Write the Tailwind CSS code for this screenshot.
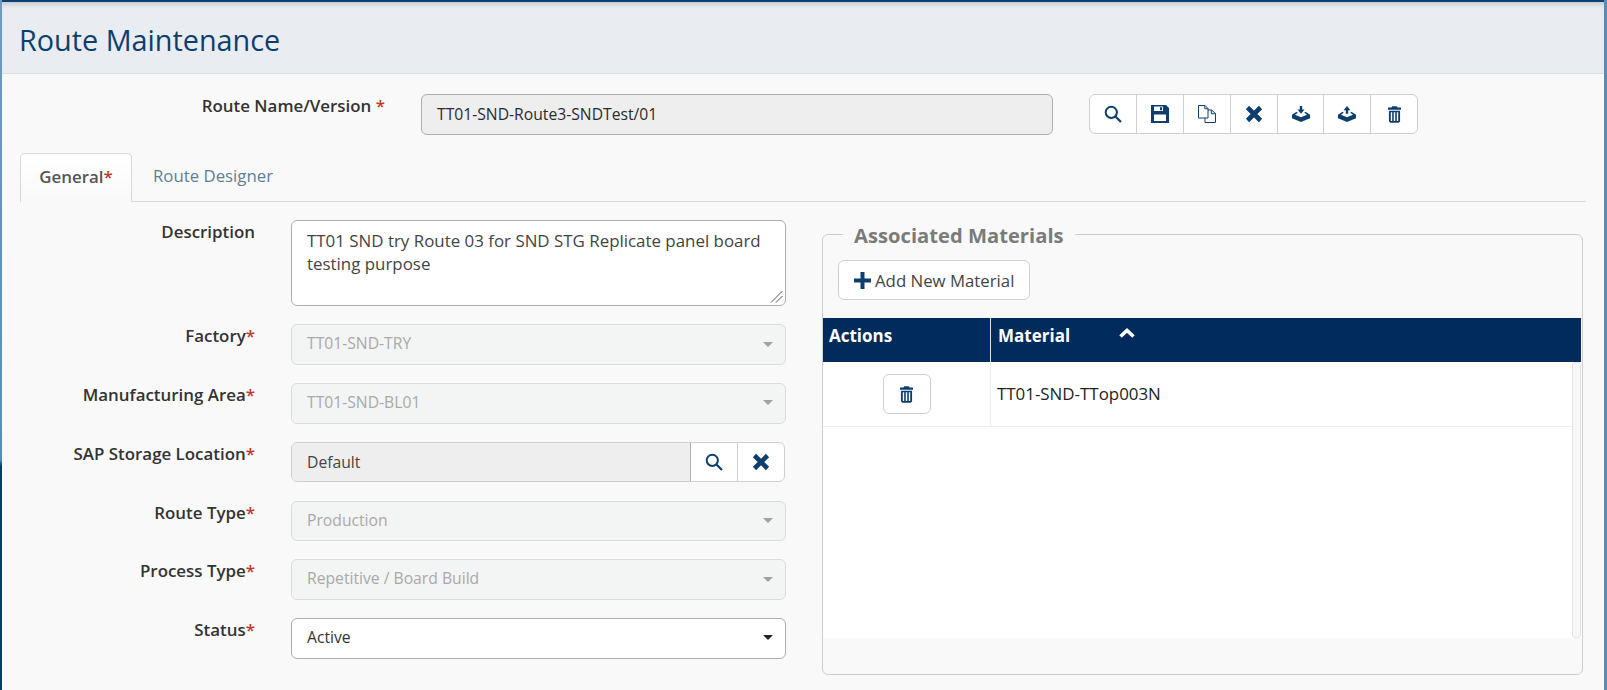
<!doctype html>
<html>
<head>
<meta charset="UTF-8" />
<script src="https://cdn.jsdelivr.net/npm/@tailwindcss/browser@4"></script>
</head>
<body class="h-[690px] overflow-hidden bg-[#f9f9f9] font-['Open_Sans',sans-serif] text-[#2b2b2b]">

<svg class="hidden">
  <symbol id="i-search" viewBox="0 0 18 18"><circle cx="7.3" cy="7.3" r="5.6" fill="none" stroke="currentColor" stroke-width="2"/><path d="M11.5 11.5 17 17" stroke="currentColor" stroke-width="2.2" fill="none"/></symbol>
  <symbol id="i-save" viewBox="0 0 18 18"><path fill-rule="evenodd" fill="currentColor" d="M0 0h15l3 3v15H0zM3 1.500v4.500h9V1.500zM9 2.200h2v3H9zM3 9.500V16h12V9.500z"/></symbol>
  <symbol id="i-copy" viewBox="0 0 18 18"><path fill="none" stroke="currentColor" stroke-width="1" d="M.5.500h6.500l3 3v9.500H.5zM6.800.700v3h3M10 5h3.500l4 3.500v9H7v-4.500M13.300 5.200v3.500h4"/></symbol>
  <symbol id="i-x" viewBox="0 0 18 18"><path d="M2.500 2.500l13 13M15.500 2.500l-13 13" stroke="currentColor" stroke-width="4.600" fill="none"/></symbol>
  <symbol id="i-down" viewBox="0 0 18 16"><path fill="currentColor" d="M7.800 0h2.400v3.500h2.300L9 7.800 5.500 3.500h2.300zM0 8.800l4.500-3 1.200 1-2.700 2L9 11.300l6-2.500-2.700-2 1.200-1 4.500 3v3.500L9 16l-9-3.700z"/></symbol>
  <symbol id="i-up" viewBox="0 0 18 16"><path fill="currentColor" d="M9 0l3.500 4.300h-2.300v3.500H7.800V4.300H5.500zM0 8.800l4.500-3 1.200 1-2.700 2L9 11.300l6-2.500-2.700-2 1.200-1 4.500 3v3.500L9 16l-9-3.700z"/></symbol>
  <symbol id="i-trash" viewBox="0 0 14 18"><path fill="currentColor" fill-rule="evenodd" d="M4.500 0h5l.8 1.500H14V4H0V1.500h3.700zM1 5h12v11.500L11.500 18h-9L1 16.500zM3 6.500V16h1.500V6.500zM6.200 6.500V16h1.600V6.500zM9.500 6.500V16H11V6.500z"/></symbol>
</svg>

<div class="flex h-full">
  <div class="w-[2px] shrink-0 bg-[linear-gradient(to_bottom,#6f9bc0_0,#5b8cb6_460px,#0a3a68_466px,#0a3a68_100%)]"></div>

  <div class="min-w-0 flex-1">
    <div class="h-[2px] bg-[#0d4173]"></div>
    <header class="flex h-[72px] items-center border-b border-[#dcdfe3] bg-[#e9ecf1] pl-[17px] pt-[6px] shadow-[inset_0_5px_5px_-3px_rgba(0,0,0,0.18)]">
      <h1 class="text-[28.8px] leading-none text-[#0d3f6e]">Route Maintenance</h1>
    </header>

    <div class="flex h-[41px] mt-[20px] items-start">
      <label class="w-[383px] pt-[1px] text-right text-[16.9px] font-semibold leading-[22px] text-[#333333]">Route Name/Version <span class="text-[#c0392b]">*</span></label>
      <div class="ml-[36px] flex h-[41px] w-[632px] items-center rounded-[6px] border border-[#aeaeae] bg-[#eeeeee] px-[15px] text-[15.7px]">TT01-SND-Route3-SNDTest/01</div>
      <div class="ml-[36px] flex h-[40px] overflow-hidden rounded-[6px] border border-[#cfcfcf] bg-white text-[#0d3f6e]">
        <span class="flex w-[47px] items-center justify-center border-r border-[#cfcfcf]"><svg class="h-[18px] w-[18px]"><use href="#i-search"/></svg></span>
        <span class="flex w-[47px] items-center justify-center border-r border-[#cfcfcf]"><svg class="h-[18px] w-[18px]"><use href="#i-save"/></svg></span>
        <span class="flex w-[47px] items-center justify-center border-r border-[#cfcfcf]"><svg class="h-[18px] w-[18px]"><use href="#i-copy"/></svg></span>
        <span class="flex w-[47px] items-center justify-center border-r border-[#cfcfcf]"><svg class="h-[18px] w-[18px]"><use href="#i-x"/></svg></span>
        <span class="flex w-[46px] items-center justify-center border-r border-[#cfcfcf]"><svg class="h-[16px] w-[18px]"><use href="#i-down"/></svg></span>
        <span class="flex w-[47px] items-center justify-center border-r border-[#cfcfcf]"><svg class="h-[16px] w-[18px]"><use href="#i-up"/></svg></span>
        <span class="flex w-[46px] items-center justify-center"><svg class="h-[17px] w-[13px]"><use href="#i-trash"/></svg></span>
      </div>
    </div>

    <div class="ml-[18px] mr-[18px] mt-[18px] flex h-[49px] border-b border-[#d9d9d9]">
      <div class="h-[49px] w-[112px] rounded-t-[5px] border border-b-0 border-[#d9d9d9] bg-[linear-gradient(to_bottom,#ffffff,#f9f9f9)] pt-[11px] text-center text-[16.9px] font-semibold leading-[24px] text-[#555555]">General<span class="text-[#c0392b]">*</span></div>
      <div class="pl-[21px] pt-[11px] text-[16.8px] leading-[24px] text-[#5f7f94]">Route Designer</div>
    </div>

    <div class="flex">
      <div class="w-[820px] shrink-0">
        <div class="mt-[18px] flex">
          <label class="w-[253px] pt-[1px] text-right text-[16.9px] font-semibold leading-[22px] text-[#333333]">Description</label>
          <div class="relative ml-[36px] h-[86px] w-[495px] rounded-[6px] border border-[#aeaeae] bg-white px-[15px] pt-[8px] text-[16.9px] leading-[23px] text-[#444444]">TT01 SND try Route 03 for SND STG Replicate panel board testing purpose
            <svg class="absolute bottom-[1px] right-[1px] h-[15px] w-[15px]" viewBox="0 0 15 15"><path d="M13.500 2 2 13.500M13.500 7 7 13.500" stroke="#555555" stroke-width="1" fill="none"/></svg>
          </div>
        </div>

        <div class="mt-[18px] flex">
          <label class="w-[253px] pt-[1px] text-right text-[16.9px] font-semibold leading-[22px] text-[#333333]">Factory<span class="text-[#c0392b]">*</span></label>
          <div class="ml-[36px] flex h-[41px] w-[495px] items-center justify-between rounded-[6px] border border-[#dcdcdc] bg-[#f3f4f4] pb-[1px] pl-[15px] pr-[12px] text-[15.7px] text-[#a9a9a9]">TT01-SND-TRY<span class="h-0 w-0 border-x-[5px] border-t-[5px] border-x-transparent border-t-[#a0a0a0]"></span></div>
        </div>
        <div class="mt-[18px] flex">
          <label class="w-[253px] pt-[1px] text-right text-[16.9px] font-semibold leading-[22px] text-[#333333]">Manufacturing Area<span class="text-[#c0392b]">*</span></label>
          <div class="ml-[36px] flex h-[41px] w-[495px] items-center justify-between rounded-[6px] border border-[#dcdcdc] bg-[#f3f4f4] pb-[2px] pl-[15px] pr-[12px] text-[15.7px] text-[#a9a9a9]">TT01-SND-BL01<span class="h-0 w-0 border-x-[5px] border-t-[5px] border-x-transparent border-t-[#a0a0a0]"></span></div>
        </div>
        <div class="mt-[18px] flex">
          <label class="w-[253px] pt-[1px] text-right text-[16.9px] font-semibold leading-[22px] text-[#333333]">SAP Storage Location<span class="text-[#c0392b]">*</span></label>
          <div class="ml-[36px] flex h-[40px] w-[494px] overflow-hidden rounded-[6px] border border-[#cfcfcf] bg-white text-[#0d3f6e]">
            <div class="flex flex-1 items-center border-r border-[#aeaeae] bg-[#eeeeee] pl-[15px] pt-[1px] text-[15.7px] text-[#444444]">Default</div>
            <span class="flex w-[47px] items-center justify-center border-r border-[#cfcfcf]"><svg class="h-[18px] w-[18px]"><use href="#i-search"/></svg></span>
            <span class="flex w-[46px] items-center justify-center"><svg class="h-[18px] w-[18px]"><use href="#i-x"/></svg></span>
          </div>
        </div>
        <div class="mt-[19px] flex">
          <label class="w-[253px] pt-[1px] text-right text-[16.9px] font-semibold leading-[22px] text-[#333333]">Route Type<span class="text-[#c0392b]">*</span></label>
          <div class="ml-[36px] flex h-[40px] w-[495px] items-center justify-between rounded-[6px] border border-[#dcdcdc] bg-[#f3f4f4] pb-[1px] pl-[15px] pr-[12px] text-[15.7px] text-[#a9a9a9]">Production<span class="h-0 w-0 border-x-[5px] border-t-[5px] border-x-transparent border-t-[#a0a0a0]"></span></div>
        </div>
        <div class="mt-[18px] flex">
          <label class="w-[253px] pt-[1px] text-right text-[16.9px] font-semibold leading-[22px] text-[#333333]">Process Type<span class="text-[#c0392b]">*</span></label>
          <div class="ml-[36px] flex h-[41px] w-[495px] items-center justify-between rounded-[6px] border border-[#dcdcdc] bg-[#f3f4f4] pb-[1px] pl-[15px] pr-[12px] text-[15.7px] text-[#a9a9a9]">Repetitive / Board Build<span class="h-0 w-0 border-x-[5px] border-t-[5px] border-x-transparent border-t-[#a0a0a0]"></span></div>
        </div>
        <div class="mt-[18px] flex">
          <label class="w-[253px] pt-[1px] text-right text-[16.9px] font-semibold leading-[22px] text-[#333333]">Status<span class="text-[#c0392b]">*</span></label>
          <div class="ml-[36px] flex h-[41px] w-[495px] items-center justify-between rounded-[6px] border border-[#aeaeae] bg-white pb-[2px] pl-[15px] pr-[12px] text-[15.7px] text-[#333333]">Active<span class="h-0 w-0 border-x-[5px] border-t-[5px] border-x-transparent border-t-[#222222]"></span></div>
        </div>
      </div>

      <div class="relative mt-[32px] h-[441px] w-[761px] rounded-[6px] border border-[#cfcfcf]">
        <div class="absolute -top-[13px] left-[20px] bg-[#f9f9f9] px-[11px] text-[20.2px] font-bold leading-[26px] text-[#7b7b7b]">Associated Materials</div>
        <div class="ml-[15px] mt-[25px] flex h-[40px] w-[192px] items-center gap-[4px] rounded-[6px] border border-[#cfcfcf] bg-white pl-[15px] pt-[1px] text-[16.8px] text-[#444444]">
          <svg class="h-[17px] w-[17px]" viewBox="0 0 17 17"><path d="M8.500 0v17M0 8.500h17" stroke="#0d3f6e" stroke-width="4" fill="none"/></svg>
          Add New Material
        </div>
        <div class="mt-[18px] flex h-[44px] w-[758px] bg-[#002b5c] text-[17px] font-bold text-white">
          <div class="w-[168px] border-r border-[#dfe5ec] pl-[6px] pt-[7px] leading-[22px]">Actions</div>
          <div class="flex w-[240px] items-start pl-[7px] pt-[7px] leading-[22px]">Material
            <svg class="ml-[49px] mt-[3px] h-[10px] w-[16px]" viewBox="0 0 16 10"><path d="M1.500 8.500 8 2.500l6.500 6" stroke="#ffffff" stroke-width="3.600" fill="none"/></svg>
          </div>
        </div>
        <div class="flex h-[276px] bg-white">
          <div class="min-w-0 flex-1">
            <div class="flex h-[65px] border-b border-[#eeeeee]">
              <div class="flex w-[168px] items-center justify-center border-r border-[#eeeeee]">
                <span class="flex h-[40px] w-[48px] items-center justify-center rounded-[6px] border border-[#cfcfcf] bg-white text-[#0d3f6e]"><svg class="h-[17px] w-[13px]"><use href="#i-trash"/></svg></span>
              </div>
              <div class="flex items-center pl-[6px] text-[16.9px] text-[#222222]">TT01-SND-TTop003N</div>
            </div>
          </div>
          <div class="mr-[1px] w-[9px] rounded-[3px] border border-[#e3e3e3] bg-[#f7f7f7]"></div>
        </div>
      </div>
    </div>
  </div>

  <div class="w-[3px] shrink-0 bg-[#5b8cb6]"></div>
</div>
</body>
</html>
